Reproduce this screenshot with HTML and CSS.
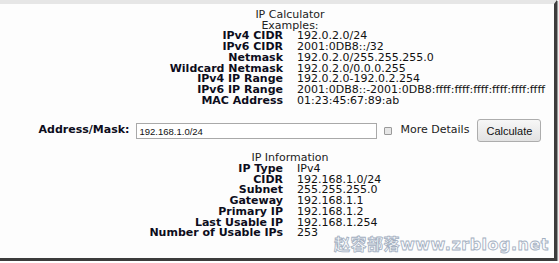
FILE: index.html
```html
<!DOCTYPE html>
<html>
<head>
    <title>IP Calculator</title>
    <link rel="stylesheet" href="styles.css">
</head>
<body>
    <div class="frame">
        <div class="calc">
            <div class="heading">IP Calculator</div>
            <div class="heading">Examples:</div>
            <dl class="pairs">
                <dt>IPv4 CIDR</dt><dd>192.0.2.0/24</dd>
                <dt>IPv6 CIDR</dt><dd>2001:0DB8::/32</dd>
                <dt>Netmask</dt><dd>192.0.2.0/255.255.255.0</dd>
                <dt>Wildcard Netmask</dt><dd>192.0.2.0/0.0.0.255</dd>
                <dt>IPv4 IP Range</dt><dd>192.0.2.0-192.0.2.254</dd>
                <dt>IPv6 IP Range</dt><dd>2001:0DB8::-2001:0DB8:ffff:ffff:ffff:ffff:ffff:ffff</dd>
                <dt>MAC Address</dt><dd>01:23:45:67:89:ab</dd>
            </dl>

            <form class="query">
                <label for="addr" class="addr-label">Address/Mask:</label>
                <input id="addr" class="addr" type="text" value="192.168.1.0/24">
                <input id="more" class="more-box" type="checkbox">
                <label for="more" class="more">More Details</label>
                <button type="button" class="calc-btn">Calculate</button>
            </form>

            <div class="heading">IP Information</div>
            <dl class="pairs">
                <dt>IP Type</dt><dd>IPv4</dd>
                <dt>CIDR</dt><dd>192.168.1.0/24</dd>
                <dt>Subnet</dt><dd>255.255.255.0</dd>
                <dt>Gateway</dt><dd>192.168.1.1</dd>
                <dt>Primary IP</dt><dd>192.168.1.2</dd>
                <dt>Last Usable IP</dt><dd>192.168.1.254</dd>
                <dt>Number of Usable IPs</dt><dd>253</dd>
            </dl>
        </div>
        <div class="watermark">赵容部落www.zrblog.net</div>
    </div>
</body>
</html>
```

FILE: styles.css
```css
body {
    margin: 0;
    background: #fff;
}

.frame {
    position: relative;
    width: 554px;
    height: 254px;
    border-top: 4px solid #e6e6e6;
    border-right: 3px solid #3c3c3c;
    border-bottom: 3px solid #3c3c3c;
    box-shadow: 1px 1px 1px #999;
    background: #fdfdfd;
    overflow: hidden;
}

.calc {
    padding: 6px 0 0 26px;
    font-family: "DejaVu Sans", Verdana, sans-serif;
    font-size: 11px;
    line-height: 10.7px;
    color: #111;
}

.heading {
    text-align: center;
    color: #222;
}

.pairs {
    display: grid;
    grid-template-columns: minmax(0, 1fr) minmax(0, 1fr);
    column-gap: 14px;
    margin: 0;
}

.pairs dt {
    text-align: right;
    font-weight: bold;
    color: #0d0d1c;
    white-space: nowrap;
}

.pairs dd {
    margin: 0;
    white-space: nowrap;
}

.query {
    display: flex;
    justify-content: center;
    align-items: center;
    height: 23px;
    margin: 13px 0 11px;
}

.addr-label {
    font-weight: bold;
    color: #0d0d1c;
    margin-right: 7px;
}

.addr {
    box-sizing: border-box;
    width: 241px;
    height: 16px;
    margin: 1px 7px 0 0;
    padding: 0 2px;
    border: 1px solid #a9a9a9;
    font-family: "Liberation Sans", Arial, sans-serif;
    font-size: 9.5px;
    color: #111;
    background: #fff;
}

.more-box {
    appearance: none;
    width: 8px;
    height: 8px;
    margin: 0 8px 0 0;
    border: 1px solid #9a9a9a;
    border-radius: 1px;
    background: #e6e6e6;
}

.more {
    margin-right: 8px;
    color: #222;
}

.calc-btn {
    width: 64px;
    height: 23px;
    padding: 0;
    border: 1px solid #adadad;
    border-radius: 3px;
    background: linear-gradient(#f7f7f7, #e2e2e2);
    font-family: "Liberation Sans", Arial, sans-serif;
    font-size: 11px;
    color: #111;
}

/* watermark stamped over the bottom corner */
.watermark {
    position: absolute;
    right: 5px;
    bottom: 3px;
    font-family: "DejaVu Sans", "Noto Sans CJK SC", sans-serif;
    font-size: 16px;
    font-weight: bold;
    letter-spacing: 0.5px;
    color: #fbfcfe;
    -webkit-text-stroke: 0.8px #a3afc0;
    text-shadow: 0 0 1px #dfe5ee;
    white-space: nowrap;
}
```
